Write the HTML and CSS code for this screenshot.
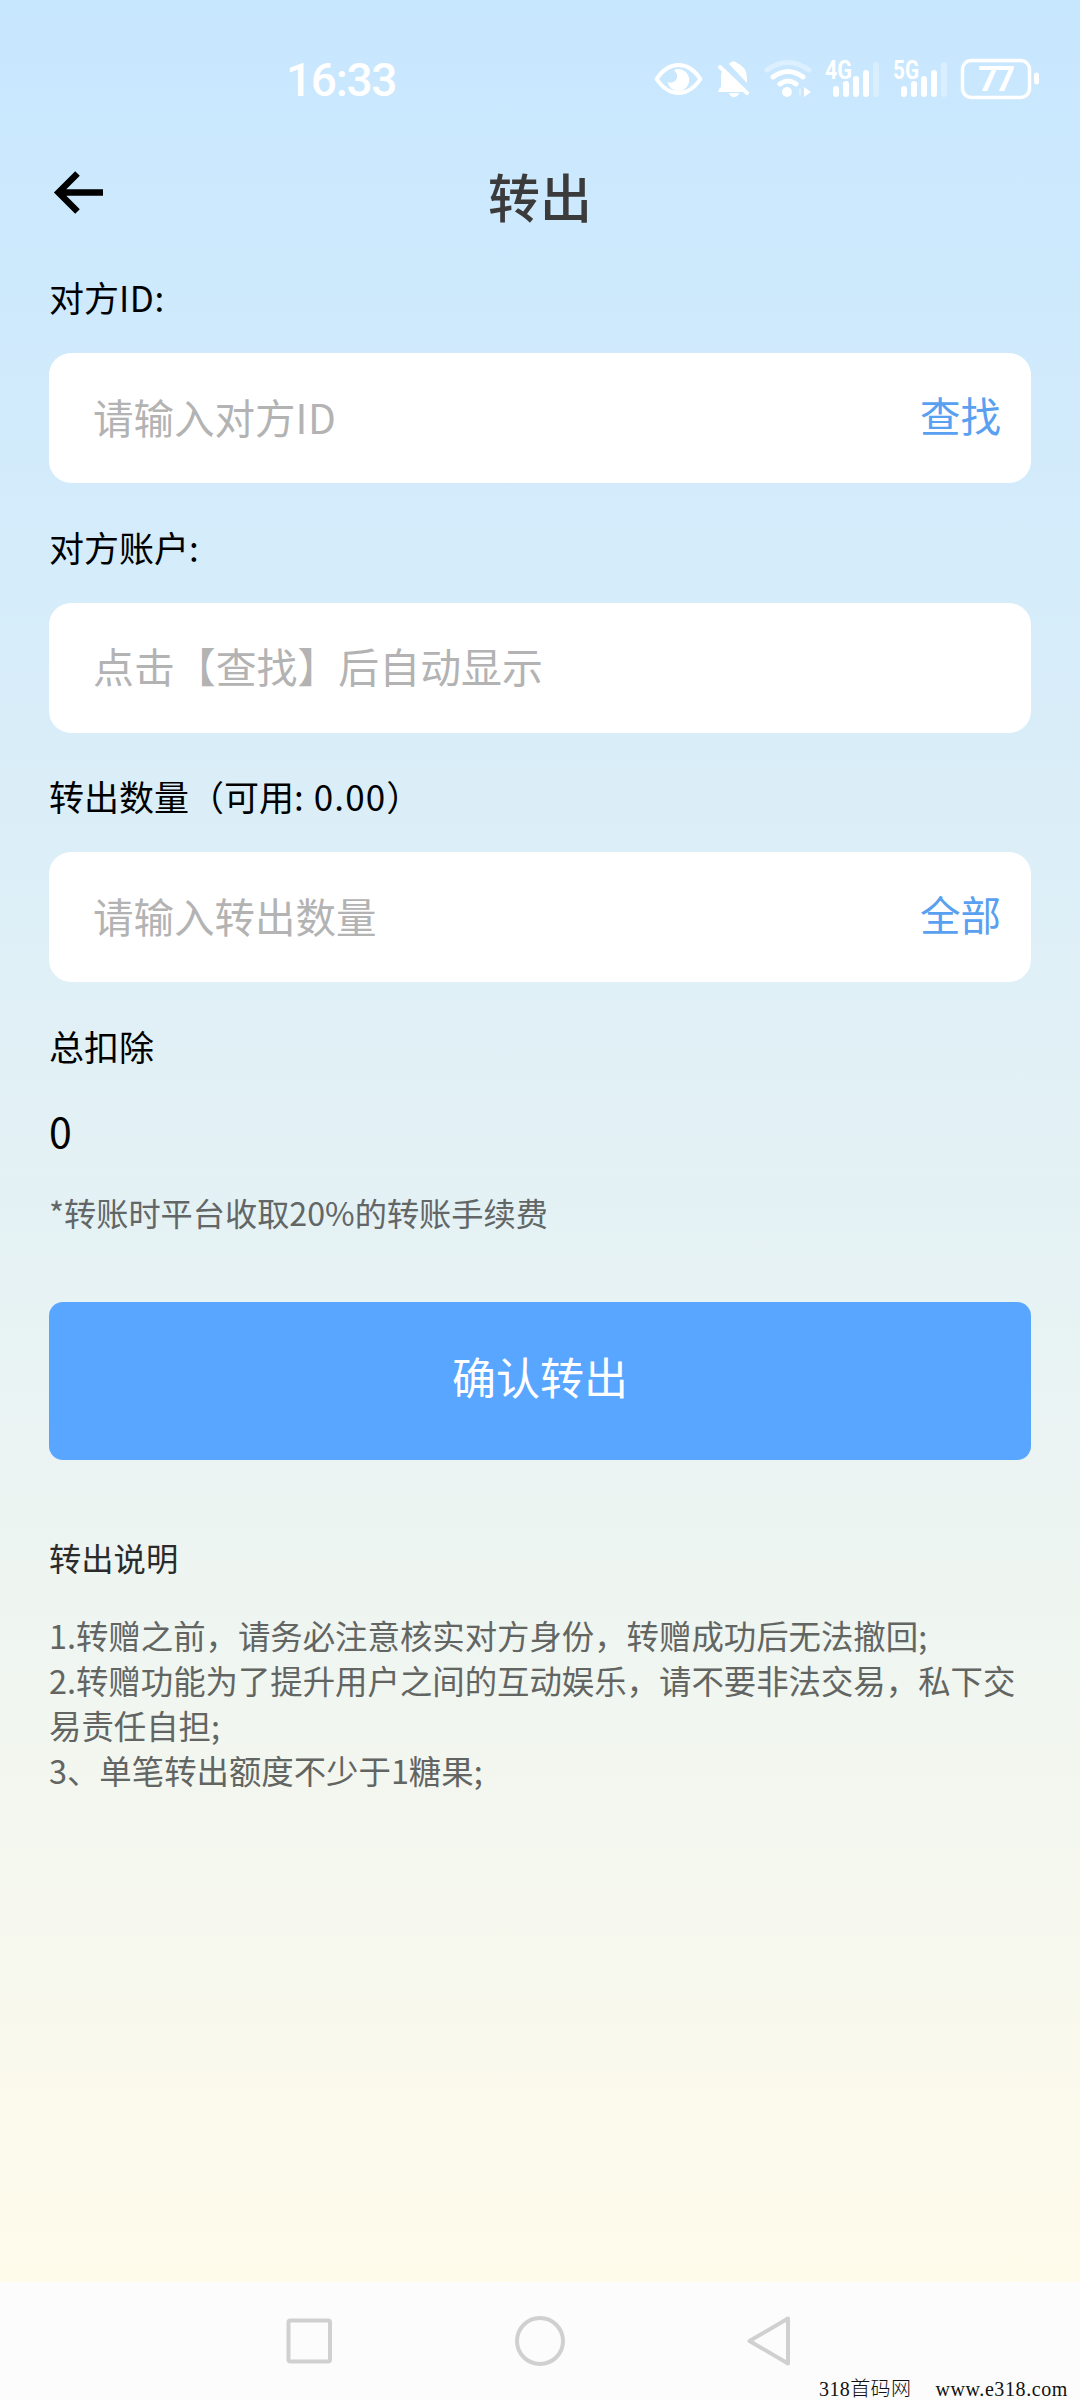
FILE: index.html
```html
<!DOCTYPE html>
<html lang="zh-CN">
<head>
<meta charset="utf-8">
<title>转出</title>
<link rel="stylesheet" href="styles.css">
</head>
<body>
<div class="screen">
  <header class="status">
    <span class="clock">16:33</span>
    <svg class="status-icons" width="420" height="80" viewBox="0 0 420 80" fill="none" stroke="#fff" stroke-linecap="round" stroke-linejoin="round">
      <path d="M16.500 39Q26 25 38.500 25T60.500 39Q51 53 38.500 53T16.500 39Z" stroke-width="4"/>
      <path d="M38 29A11 11 0 1 1 27.500 42Q33 44 36 40Q39 35 34 30Q36 29 38 29Z" fill="#fff" stroke="none"/>
      <path d="M78 52Q78 49 81 47V35Q81 32 83 30L104 52ZM89 24Q93 19 97 23Q107 27 107 38V43Z" fill="#fff" stroke="none"/>
      <path d="M80 27L107 53" stroke-width="4"/>
      <path d="M89 53H99Q98 57 94 57T89 53Z" fill="#fff" stroke="none"/>
      <path d="M127 30Q148 15 169 30" stroke-width="5" opacity=".35"/>
      <path d="M133 37Q148 26 163 37M140 44Q148 38 156 44" stroke-width="5"/>
      <circle cx="147" cy="52" r="5" fill="#fff" stroke="none"/>
      <path d="M164 47L171 52L164 57Z" fill="#fff" stroke="none"/>
      <path d="M160 49V55" stroke-width="1.500" opacity=".5"/>
      <g stroke-width="6"><path d="M196 49V54M206 44V54M216 39V54M226 33V54"/><path d="M236 25V54" opacity=".3"/>
      <path d="M264 49V54M274 44V54M284 39V54M294 33V54"/><path d="M304 25V54" opacity=".3"/></g>
      <g class="net" fill="#fff" stroke="none"><text x="185" y="38.500" textLength="27" lengthAdjust="spacingAndGlyphs">4G</text><text x="253" y="38.500" textLength="26" lengthAdjust="spacingAndGlyphs">5G</text></g>
      <rect x="322.500" y="20.500" width="67" height="37" rx="9" stroke-width="3.500"/>
      <path d="M396.500 35V42" stroke-width="5"/>
      <text class="battery" x="338" y="51" textLength="37" fill="#fff" stroke="none">77</text>
    </svg>
  </header>
  <nav class="topbar">
    <svg class="back" width="52" height="46" viewBox="0 0 52 46" fill="none" stroke="#000" stroke-width="6.500"><path d="M25.500 3.500L6.500 22.500L25.500 41.500M6 22.500H51"/></svg>
    <h1 class="title">转出</h1>
  </nav>
  <main class="form">
    <section class="field">
      <div class="label">对方<span class="latin">ID:</span></div>
      <div class="box"><span class="hint">请输入对方<span class="latin">ID</span></span><span class="action">查找</span></div>
    </section>
    <section class="field">
      <div class="label">对方账户:</div>
      <div class="box"><span class="hint readonly">点击【查找】后自动显示</span></div>
    </section>
    <section class="field">
      <div class="label">转出数量（可用<span class="number">: 0.00</span>）</div>
      <div class="box"><span class="hint">请输入转出数量</span><span class="action">全部</span></div>
    </section>
    <div class="label">总扣除</div>
    <div class="total">0</div>
    <div class="fee">*转账时平台收取20%的转账手续费</div>
    <div class="submit">确认转出</div>
    <h2 class="notes-title">转出说明</h2>
    <div class="notes">
      <p>1.转赠之前，请务必注意核实对方身份，转赠成功后无法撤回;</p>
      <p>2.转赠功能为了提升用户之间的互动娱乐，请不要非法交易，私下交易责任自担;</p>
      <p>3、单笔转出额度不少于1糖果;</p>
    </div>
  </main>
  <footer class="navbar">
    <svg class="nav-icons" width="560" height="118" viewBox="0 0 560 118" fill="none" stroke="#d0d0d0" stroke-width="4" stroke-linejoin="round">
      <rect x="48.500" y="38.500" width="41.500" height="41" rx="2"/>
      <circle cx="300" cy="59" r="23"/>
      <path d="M548 36.500V81.500L509.500 59Z"/>
    </svg>
    <div class="watermark"><span>318首码网</span><span class="site">www.e318.com</span></div>
  </footer>
</div>
</body>
</html>
```
FILE: styles.css
```css
* { box-sizing: border-box; margin: 0; padding: 0; }
body { font-family: "Noto Sans CJK SC", sans-serif; color: #000; }
.screen {
  width: 1080px; height: 2400px; overflow: hidden;
  display: flex; flex-direction: column;
  background: linear-gradient(#c7e7ff 0, #fffbeb 2282px);
}
.status { height: 120px; padding: 40px 20px 0 286px; display: flex; justify-content: space-between; }
.clock { font: 500 46px/80px Roboto, sans-serif; letter-spacing: -1.300px; color: #fff; }
.net { font: 700 25px Roboto, sans-serif; }
.battery { font: 700 35px Roboto, sans-serif; }
.topbar { height: 151px; display: grid; grid-template-columns: 1fr auto 1fr; padding: 48px 49px 0; }
.back { margin: 2px 0 0 3px; }
.title { font-size: 52px; line-height: 56px; font-weight: 500; color: #3b3b3b; }
.form { flex: 1; padding: 0 49px; }
.field { height: 249.600px; }
.label { font-size: 35px; line-height: 52px; height: 82px; }
.latin { letter-spacing: .6px; }
.number { letter-spacing: 1.100px; }
.box { height: 130px; border-radius: 22px; background: #fff; padding: 0 30px 0 44px; display: flex; justify-content: space-between; font-size: 40.500px; line-height: 128px; }
.hint { color: #b3b3b3; }
.readonly { font-size: 40.900px; line-height: 125px; }
.action { color: #59a0f0; line-height: 123px; }
.total { font-size: 41px; line-height: 56px; height: 86px; }
.fee { font-size: 32.200px; line-height: 48px; height: 114px; color: #626666; }
.submit { height: 158px; border-radius: 14px; background: #58a6ff; color: #fff; font-size: 44px; line-height: 149px; text-align: center; }
.notes-title { font-size: 32.300px; line-height: 48px; font-weight: 400; color: #2b2b2b; margin-top: 73px; }
.notes { margin-top: 31px; font-size: 32.400px; line-height: 45px; color: #626562; }
.navbar { height: 118px; background: #fcfcfc; display: flex; padding-left: 240px; }
.nav-icons { flex: none; }
.watermark { align-self: flex-end; margin-left: 19px; display: flex; justify-content: space-between; width: 249px; font: 300 20px/22px "Liberation Serif", "Noto Sans CJK SC", serif; letter-spacing: .4px; color: #111; white-space: nowrap; }
.site { letter-spacing: .6px; }
```
